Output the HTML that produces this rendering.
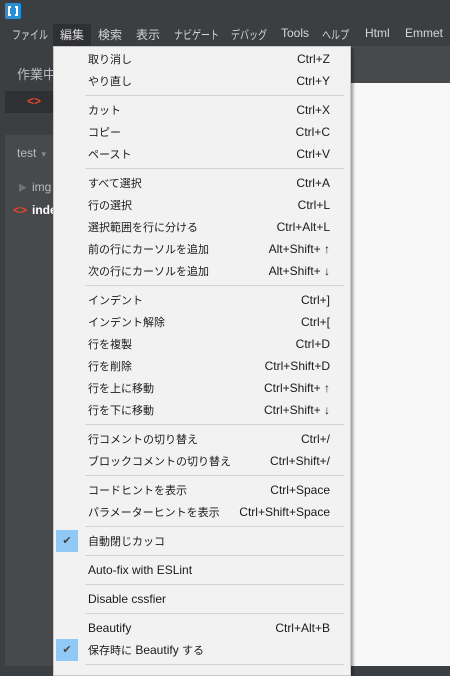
<!DOCTYPE html><html><head><meta charset="utf-8"><style>
*{margin:0;padding:0;box-sizing:border-box}
body{width:450px;height:666px;overflow:hidden;background:#3c3f42;font-family:"Liberation Sans","Noto Sans CJK JP",sans-serif;font-size:12px;position:relative}
.a{position:absolute}
.mb span{position:absolute;top:26px;color:#d6d6d6;font-size:12px;white-space:nowrap;transform-origin:0 0}
.mb .n{transform:scaleX(.75)}
.menu{position:absolute;left:53px;top:46px;width:298px;height:630px;background:#f2f2f2;border:1px solid #c8c8c8;box-shadow:2px 2px 3px rgba(0,0,0,.4)}
.it{height:22px;line-height:22px;position:relative;color:#1a1a1a;padding-left:34px;white-space:nowrap}
.it .k{position:absolute;right:20px;top:0;font-size:12px}
.j{font-size:11px}
.sep{height:7px;position:relative}
.sep:after{content:"";position:absolute;left:31px;right:6px;top:3px;border-top:1px solid #d4d4d4}
.ck{position:absolute;left:2px;top:0;width:22px;height:22px;background:#90c8f6;color:#444;text-align:center;line-height:22px;font-size:11px}
</style></head><body>
<div class="a" style="left:5px;top:3px;width:16px;height:16px;background:#2a8ed6;border-radius:2px"><div class="a" style="left:3px;top:3px;width:10px;height:10px;border:2px solid #fff"></div><div class="a" style="left:6px;top:2px;width:4px;height:12px;background:#2a8ed6"></div></div>
<div class="a" style="left:53px;top:24px;width:38px;height:22px;background:#2e3034"></div>
<div class="mb"><span class="n" style="left:12px">ファイル</span><span style="left:60px">編集</span><span style="left:98px">検索</span><span style="left:136px">表示</span><span class="n" style="left:174px">ナビゲート</span><span class="n" style="left:231px">デバッグ</span><span style="left:281px">Tools</span><span class="n" style="left:322px">ヘルプ</span><span style="left:365px">Html</span><span style="left:405px">Emmet</span></div>
<div class="a" style="left:350px;top:46px;width:100px;height:37px;background:#47494c"></div>
<div class="a" style="left:350px;top:83px;width:100px;height:583px;background:#f8f8f8"></div>
<div class="a" style="left:17px;top:64px;color:#b8bcc0;font-size:13px">作業中</div>
<div class="a" style="left:5px;top:91px;width:48px;height:22px;background:#2e3033"></div>
<div class="a" style="left:27px;top:94px;color:#e8462a;font-weight:bold;font-size:12px">&lt;&gt;</div>
<div class="a" style="left:5px;top:135px;width:48px;height:531px;background:#47494c"></div>
<div class="a" style="left:17px;top:146px;color:#b8bcc0;font-size:12px">test <span style="font-size:8px;color:#888">▼</span></div>
<div class="a" style="left:18px;top:181px;color:#6f7478;font-size:9px">▶</div>
<div class="a" style="left:32px;top:180px;color:#b8bcc0;font-size:12px">img</div>
<div class="a" style="left:13px;top:203px;color:#e8462a;font-weight:bold;font-size:12px">&lt;&gt;</div>
<div class="a" style="left:32px;top:203px;color:#fff;font-weight:bold;font-size:12px">inde</div>
<div class="menu"><div style="height:1px"></div>
<div class="it"><span class="j">取り消し</span><span class="k">Ctrl+Z</span></div>
<div class="it"><span class="j">やり直し</span><span class="k">Ctrl+Y</span></div>
<div class="sep"></div>
<div class="it"><span class="j">カット</span><span class="k">Ctrl+X</span></div>
<div class="it"><span class="j">コピー</span><span class="k">Ctrl+C</span></div>
<div class="it"><span class="j">ペースト</span><span class="k">Ctrl+V</span></div>
<div class="sep"></div>
<div class="it"><span class="j">すべて選択</span><span class="k">Ctrl+A</span></div>
<div class="it"><span class="j">行の選択</span><span class="k">Ctrl+L</span></div>
<div class="it"><span class="j">選択範囲を行に分ける</span><span class="k">Ctrl+Alt+L</span></div>
<div class="it"><span class="j">前の行にカーソルを追加</span><span class="k">Alt+Shift+ ↑</span></div>
<div class="it"><span class="j">次の行にカーソルを追加</span><span class="k">Alt+Shift+ ↓</span></div>
<div class="sep"></div>
<div class="it"><span class="j">インデント</span><span class="k">Ctrl+]</span></div>
<div class="it"><span class="j">インデント解除</span><span class="k">Ctrl+[</span></div>
<div class="it"><span class="j">行を複製</span><span class="k">Ctrl+D</span></div>
<div class="it"><span class="j">行を削除</span><span class="k">Ctrl+Shift+D</span></div>
<div class="it"><span class="j">行を上に移動</span><span class="k">Ctrl+Shift+ ↑</span></div>
<div class="it"><span class="j">行を下に移動</span><span class="k">Ctrl+Shift+ ↓</span></div>
<div class="sep"></div>
<div class="it"><span class="j">行コメントの切り替え</span><span class="k">Ctrl+/</span></div>
<div class="it"><span class="j">ブロックコメントの切り替え</span><span class="k">Ctrl+Shift+/</span></div>
<div class="sep"></div>
<div class="it"><span class="j">コードヒントを表示</span><span class="k">Ctrl+Space</span></div>
<div class="it"><span class="j">パラメーターヒントを表示</span><span class="k">Ctrl+Shift+Space</span></div>
<div class="sep"></div>
<div class="it"><span class="ck">✔</span><span class="j">自動閉じカッコ</span></div>
<div class="sep"></div>
<div class="it">Auto-fix with ESLint</div>
<div class="sep"></div>
<div class="it">Disable cssfier</div>
<div class="sep"></div>
<div class="it">Beautify<span class="k">Ctrl+Alt+B</span></div>
<div class="it"><span class="ck">✔</span><span class="j">保存時に</span> Beautify <span class="j">する</span></div>
<div class="sep"></div>
</div>
</body></html>
